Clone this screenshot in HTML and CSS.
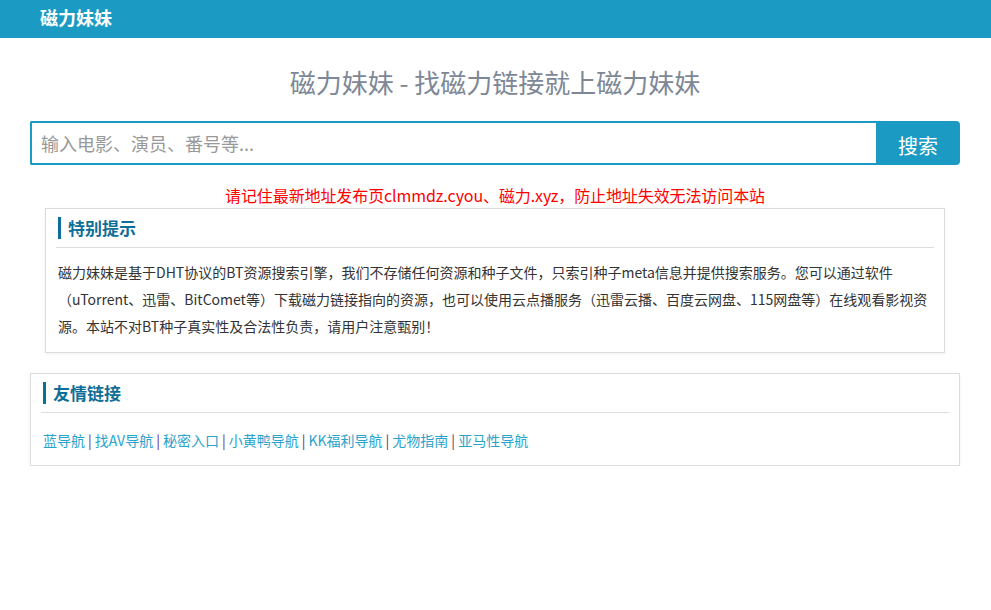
FILE: index.html
```html
<!DOCTYPE html>
<html lang="zh-CN">
<head>
<meta charset="utf-8">
<title>磁力妹妹</title>
<link rel="stylesheet" href="styles.css">
</head>
<body>
<header class="topbar">
  <a class="brand" href="#">磁力妹妹</a>
</header>
<main class="container">
  <h1 class="headline">磁力妹妹 - 找磁力链接就上磁力妹妹</h1>
  <form class="search">
    <input class="search-input" type="text" placeholder="输入电影、演员、番号等...">
    <button class="search-btn" type="button">搜索</button>
  </form>
  <p class="notice">请记住最新地址发布页clmmdz.cyou、磁力.xyz，防止地址失效无法访问本站</p>
  <section class="panel panel-inset">
    <h2 class="panel-title">特别提示</h2>
    <p class="panel-text">磁力妹妹是基于DHT协议的BT资源搜索引擎，我们不存储任何资源和种子文件，只索引种子meta信息并提供搜索服务。您可以通过软件（uTorrent、迅雷、BitComet等）下载磁力链接指向的资源，也可以使用云点播服务（迅雷云播、百度云网盘、115网盘等）在线观看影视资源。本站不对BT种子真实性及合法性负责，请用户注意甄别！</p>
  </section>
  <section class="panel panel-links">
    <h2 class="panel-title">友情链接</h2>
    <div class="links">
      <a href="#">蓝导航</a><span class="sep">|</span><a href="#">找AV导航</a><span class="sep">|</span><a href="#">秘密入口</a><span class="sep">|</span><a href="#">小黄鸭导航</a><span class="sep">|</span><a href="#">KK福利导航</a><span class="sep">|</span><a href="#">尤物指南</a><span class="sep">|</span><a href="#">亚马性导航</a>
    </div>
  </section>
</main>
</body>
</html>
```
FILE: styles.css
```css
* { box-sizing: border-box; }
html, body { margin: 0; padding: 0; background: #fff; }
body {
  font-family: "Noto Sans CJK SC", "Noto Sans", sans-serif;
  color: #333;
}
.topbar {
  height: 38px;
  background: #1b9bc3;
  padding: 0 40px;
  display: flex;
  align-items: center;
}
.brand {
  color: #fff;
  font-size: 18px;
  font-weight: bold;
  text-decoration: none;
  line-height: 1;
  margin-top: -4px;
}
.container {
  padding: 26px 31px 0 30px;
}
.headline {
  margin: 0;
  text-align: center;
  font-weight: normal;
  font-size: 26px;
  line-height: 36px;
  color: #7d8796;
}
.search {
  display: flex;
  margin-top: 21px;
  height: 44px;
}
.search-input {
  flex: 1;
  min-width: 0;
  border: 2px solid #1b9bc3;
  border-right: none;
  padding: 0 9px;
  font-family: "Noto Sans CJK SC", sans-serif;
  font-size: 18px;
  color: #333;
  outline: none;
  border-radius: 2px 0 0 2px;
}
.search-input::placeholder { color: #999; }
.search-btn {
  width: 84px;
  border: none;
  background: #1b9bc3;
  color: #fff;
  font-family: "Noto Sans CJK SC", sans-serif;
  font-size: 20px;
  border-radius: 0 4px 4px 0;
  padding: 4px 0 0;
}
.notice {
  margin: 18px 0 0;
  text-align: center;
  color: #ff0000;
  font-size: 16px;
  line-height: 24px;
  letter-spacing: -0.1px;
}
.panel {
  background: #fff;
  border: 1px solid #dcdcdc;
  box-shadow: 0 1px 3px rgba(0,0,0,0.06);
  padding: 8px 10px 0 12px;
}
.panel-inset {
  margin: 1px 15px 0;
  padding-bottom: 12px;
}
.panel-links {
  margin-top: 20px;
  padding-bottom: 14px;
}
.panel-title {
  margin: 0;
  font-size: 17px;
  font-weight: bold;
  color: #0e6e97;
  line-height: 22px;
  border-left: 3px solid #0e6e97;
  padding-left: 7px;
  position: relative;
}
.panel-title::after {
  content: "";
  display: block;
  position: absolute;
  left: -5px;
  right: 0;
  bottom: -9px;
  height: 1px;
  background: #ddd;
}
.panel-text {
  margin: 20px 0 0;
  font-size: 14px;
  line-height: 27px;
  color: #333;
}
.links {
  margin-top: 25px;
  font-size: 14px;
  line-height: 22px;
}
.links a {
  color: #2aa3cc;
  text-decoration: none;
}
.sep {
  color: #6b2a6b;
  margin: 0 3px;
}
```
